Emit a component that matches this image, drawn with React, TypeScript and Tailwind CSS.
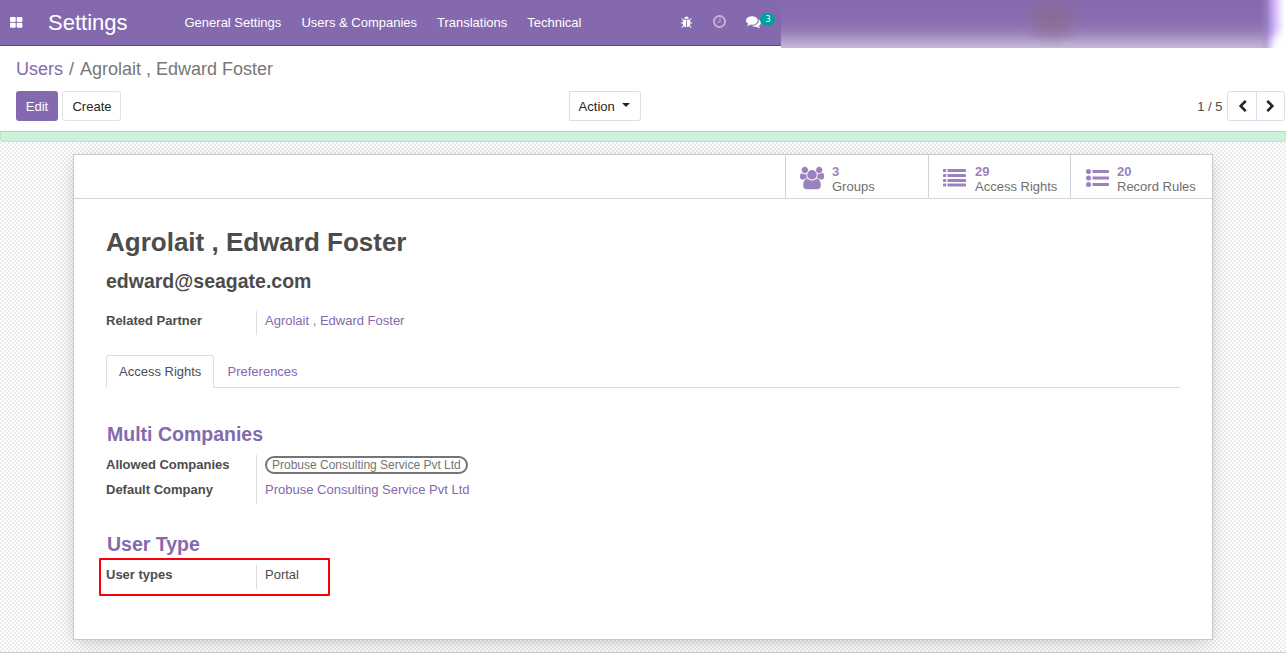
import React from "react";

const paths = {
  users:
    "M593 640q-162 5-265 128h-134q-82 0-138-40.5t-56-118.5q0-353 124-353 6 0 43.5 21t97.5 42.5 119 21.5q67 0 133-23-5 37-5 66 0 159 90 287zm1071 637q0 120-73 189.5t-194 69.5h-874q-121 0-194-69.5t-73-189.5q0-53 3.5-103.5t14-109 26.5-108.5 43-97.5 62-81 85.5-53.5 111.5-20q10 0 43 21.5t73 48 107 48 135 21.5 135-21.5 107-48 73-48 43-21.5q61 0 111.5 20t85.5 53.5 62 81 43 97.5 26.5 108.5 14 109 3.5 103.5zm-1024-1277q0 106-75 181t-181 75-181-75-75-181 75-181 181-75 181 75 75 181zm704 384q0 159-112.5 271.5t-271.5 112.5-271.5-112.5-112.5-271.5 112.5-271.5 271.5-112.5 271.5 112.5 112.5 271.5zm576 225q0 78-56 118.5t-138 40.5h-134q-103-123-265-128 90-128 90-287 0-29-5-66 66 23 133 23 59 0 119-21.5t97.5-42.5 43.5-21q124 0 124 353zm-128-609q0 106-75 181t-181 75-181-75-75-181 75-181 181-75 181 75 75 181z",
  bug: "M1696 960q0 26-19 45t-45 19h-224q0 171-67 290l208 209q19 19 19 45t-19 45q-18 19-45 19t-45-19l-198-197q-5 5-15 13t-42 28.5-65 36.5-82 29-97 13v-896h-128v896q-51 0-101.5-13.5t-87-33-66-39-43.5-32.5l-15-14-183 207q-20 21-48 21-24 0-43-16-19-18-20.5-44.5t15.5-46.5l202-227q-58-114-58-274h-224q-26 0-45-19t-19-45 19-45 45-19h224v-294l-173-173q-19-19-19-45t19-45 45-19 45 19l173 173h844l173-173q19-19 45-19t45 19 19 45-19 45l-173 173v294h224q26 0 45 19t19 45zm-480-576h-640q0-133 93.5-226.5t226.5-93.5 226.5 93.5 93.5 226.5z",
  clock:
    "M1024 544v448q0 14-9 23t-23 9h-320q-14 0-23-9t-9-23v-64q0-14 9-23t23-9h224v-352q0-14 9-23t23-9h64q14 0 23 9t9 23zm416 352q0-148-73-273t-198-198-273-73-273 73-198 198-73 273 73 273 198 198 273 73 273-73 198-198 73-273zm224 0q0 209-103 385.5t-279.5 279.5-385.5 103-385.5-103-279.5-279.5-103-385.5 103-385.5 279.5-279.5 385.5-103 385.5 103 279.5 279.5 103 385.5z",
  comments:
    "M1408 768q0 139-94 257t-256.5 186.5-353.5 68.5q-86 0-176-16-124 88-278 128-36 9-86 16h-3q-11 0-20.5-8t-11.5-21q-1-3-1-6.5t.5-6.5 2-6l2.5-5 3.5-5.5 4-5 4.5-5 4-4.5q5-6 23-25t26-29.5 22.5-29 25-38.5 20.5-44q-124-72-195-177t-71-224q0-139 94-257t256.5-186.5 353.5-68.5 353.5 68.5 256.5 186.5 94 257zm384 256q0 120-71 224.5t-195 176.5q10 24 20.5 44t25 38.5 22.5 29 26 29.5 23 25q1 1 4 4.5t4.5 5 4 5 3.5 5.5l2.5 5 2 6 .5 6.5-1 6.5q-3 14-13 22t-22 7q-50-7-86-16-154-40-278-128-90 16-176 16-271 0-472-132 58 4 88 4 161 0 309-45t264-129q125-92 192-212t67-254q0-77-23-152 129 71 204 178t75 230z",
  chevron:
    "M1427 301l-531 531 531 531q19 19 19 45t-19 45l-166 166q-19 19-45 19t-45-19l-742-742q-19-19-19-45t19-45l742-742q19-19 45-19t45 19l166 166q19 19 19 45t-19 45z",
};

function Glyph({ d, className, viewBox = "0 0 1792 1792" }: { d: string; className: string; viewBox?: string }) {
  return (
    <svg viewBox={viewBox} fill="currentColor" className={className} aria-hidden="true">
      <path d={d} />
    </svg>
  );
}

function AppsIcon() {
  return (
    <svg viewBox="0 0 13 11" fill="currentColor" className="-mt-px ml-[10px] h-[11px] w-[13px]" aria-hidden="true">
      <rect width="5.7" height="5" rx="1" />
      <rect x="6.7" width="5.7" height="5" rx="1" />
      <rect y="5.7" width="5.7" height="5" rx="1" />
      <rect x="6.7" y="5.7" width="5.7" height="5" rx="1" />
    </svg>
  );
}

function ListIcon() {
  return (
    <svg viewBox="0 0 23 18" fill="currentColor" className="mt-px mr-px h-[18px] w-[23px]" aria-hidden="true">
      {[0, 5, 10, 14.5].map((y) => (
        <g key={y}>
          <rect y={y} width="3.2" height="3" rx="0.4" />
          <rect x="4.5" y={y} width="18.5" height="3" rx="0.4" />
        </g>
      ))}
    </svg>
  );
}

function BulletsIcon() {
  return (
    <svg viewBox="0 0 23 18" fill="currentColor" className="mt-px h-[18px] w-[23px]" aria-hidden="true">
      {[2.5, 9, 15.5].map((y) => (
        <g key={y}>
          <circle cx="2.5" cy={y} r="2.5" />
          <rect x="6.5" y={y - 1.5} width="16.5" height="3" rx="0.4" />
        </g>
      ))}
    </svg>
  );
}

function Stat({ icon, value, label }: { icon: React.ReactNode; value: string; label: string }) {
  return (
    <div className="flex h-full items-center border-l border-[#ced4da]">
      <div className="flex w-[46px] shrink-0 justify-center pt-px pl-[6px] text-[#9b82bf]">{icon}</div>
      <div className="pt-[5px] leading-[15px] whitespace-nowrap">
        <div className="font-bold text-[#9b82bf]">{value}</div>
        <div className="text-[#6f6f6f]">{label}</div>
      </div>
    </div>
  );
}

function Field({ label, joined = false, children }: { label: string; joined?: boolean; children: React.ReactNode }) {
  return (
    <div className="flex h-[25px] items-start">
      <div className="w-[150px] shrink-0 font-bold leading-5">{label}</div>
      <div className={`${joined ? "h-[25px]" : "h-6"} border-l border-[#dddddd] pl-2 leading-5`}>{children}</div>
    </div>
  );
}

export default function App() {
  return (
    <div className="flex h-[653px] w-[1286px] flex-col overflow-hidden bg-white font-['Liberation_Sans',Arial,sans-serif] text-[13px] text-[#4c4c4c]">
      <header className="relative flex h-[46px] shrink-0 items-center border-b border-[#5f4594] bg-[#8569ae] text-white">
        <AppsIcon />
        <div className="ml-[25px] w-[136.5px] text-[22px] leading-none">Settings</div>
        <nav className="flex gap-5">
          <span>General Settings</span>
          <span className="pl-[0.15px]">Users &amp; Companies</span>
          <span className="-ml-[0.15px]">Translations</span>
          <span>Technical</span>
        </nav>
        <div className="ml-[99px] flex items-center">
          <Glyph d={paths.bug} className="h-[13px] w-[13px]" />
          <Glyph d={paths.clock} className="mt-[-2px] ml-[19px] h-[15px] w-[15px] opacity-50" />
          <Glyph d={paths.comments} className="mt-[-3px] ml-[19px] h-[15px] w-[15px]" />
          <span className="mt-[-6px] ml-[-1px] flex h-[13px] w-[15px] items-center justify-center rounded-[7px] bg-[#00a09d] font-['DejaVu_Sans'] text-[8px] leading-none">
            3
          </span>
        </div>
        <div className="absolute top-0 right-0 h-12 w-[505px] overflow-hidden bg-[linear-gradient(to_bottom,#866aae_0%,#886db0_40%,#9077b4_58%,#a18cc0_75%,#b9a9d0_90%,#c5b8da_100%)]">
          <div className="absolute top-0 left-[238px] h-12 w-[66px] bg-[radial-gradient(ellipse_at_50%_38%,#8b6d8cbb_0%,#8b6d8c88_25%,#8b6d8c33_50%,transparent_70%)]" />
          <div className="absolute top-0 right-0 h-12 w-[26px] bg-[linear-gradient(to_right,transparent,#a488cd88_25%,#c3a6f0_48%,#d9c1ff_62%,#f3e9ff_82%,#ffffff_96%)]" />
          <div className="absolute right-[-16px] bottom-[-16px] h-8 w-8 rounded-full bg-white blur-[4px]" />
        </div>
      </header>

      <section className="flex h-[85px] shrink-0 flex-col pt-[13px] pr-px pl-4">
        <div className="flex h-5 items-center gap-[6px] text-[18px] text-[#777777]">
          <span className="text-[#8569ae]">Users</span>
          <span>/</span>
          <span>Agrolait , Edward Foster</span>
        </div>
        <div className="mt-3 flex h-[30px]">
          <div className="flex w-[553px] gap-1">
            <button className="h-[30px] w-[42px] rounded-[3px] bg-[#8569ae] pt-[2px] text-white">Edit</button>
            <button className="h-[30px] w-[59px] rounded-[3px] border border-[#dee2e6] pt-[2px] pl-px text-[#212529]">Create</button>
          </div>
          <button className="flex h-[30px] w-[72px] items-center rounded-r-[3px] border border-[#dcdde9] pt-[2px] pl-[8.6px] text-[#212529]">
            Action
            <svg viewBox="0 0 8 4" fill="currentColor" className="mt-[-4px] ml-[7px] h-1 w-2" aria-hidden="true">
              <path d="M0 0h8L4 4z" />
            </svg>
          </button>
          <div className="ml-auto flex items-center">
            <span className="mr-[4.5px] pt-[2px]">1 / 5</span>
            <button className="flex h-[30px] w-[30px] items-center justify-center rounded-l-[3px] border border-[#dcdde9] text-[#212529]">
              <Glyph d={paths.chevron} className="mt-px h-[13px] w-[13px]" />
            </button>
            <button className="ml-[-1px] flex h-[30px] w-[29px] items-center justify-center rounded-r-[3px] border border-[#dcdde9] text-[#212529]">
              <Glyph d={paths.chevron} className="mt-px h-[13px] w-[13px] -scale-x-100" />
            </button>
          </div>
        </div>
      </section>

      <main className="flex min-h-0 flex-1 flex-col border-y border-t-[#c8cacc] border-b-[#cccccc] bg-white bg-[repeating-conic-gradient(#ebebeb_0_25%,#ffffff_0_50%)] bg-[size:4px_4px]">
        <div className="h-[10px] shrink-0 rounded-b-[3px] border border-t-0 border-[#b8e8c9] bg-[#cdf1da]" />
        <article className="mt-3 ml-[73px] h-[486px] w-[1140px] shrink-0 border border-[#c8c8d3] bg-white shadow-[0_4px_18px_-4px_rgba(0,0,0,0.25)]">
          <div className="grid h-[44px] grid-cols-[711px_143px_142px_142px] border-b border-[#ced4da]">
            <div />
            <Stat
              icon={<Glyph d={paths.users} viewBox="0 -256 1920 1792" className="mt-px mr-[-0.5px] h-6 w-6" />}
              value="3"
              label="Groups"
            />
            <Stat icon={<ListIcon />} value="29" label="Access Rights" />
            <Stat icon={<BulletsIcon />} value="20" label="Record Rules" />
          </div>
          <div className="pt-[28px] pr-8 pl-8">
            <h1 className="text-[26px] leading-[31px] font-bold">Agrolait , Edward Foster</h1>
            <h2 className="mt-[12px] text-[19.5px] leading-[23px] font-bold">edward@seagate.com</h2>
            <div className="mt-[18px]">
              <Field label="Related Partner">
                <span className="text-[#8569ae]">Agrolait , Edward Foster</span>
              </Field>
            </div>
            <div className="mt-[19px] flex h-[33px] border-b border-[#dcdde9]">
              <div className="h-[33px] w-[108px] rounded-t-[3px] border border-b-0 border-[#dcdde9] bg-white pl-3 leading-8 text-[#495057]">
                Access Rights
              </div>
              <div className="pt-px pl-[13.5px] leading-8 text-[#8569ae]">Preferences</div>
            </div>
            <h3 className="mt-[35px] pl-px text-[19.5px] leading-[23px] font-bold text-[#8569ae]">Multi Companies</h3>
            <div className="mt-[9px]">
              <Field label="Allowed Companies" joined>
                <span className="mt-px flex h-[18px] items-center rounded-full border-2 border-[#757575] px-[5px] text-[12px] text-[#757575]">
                  Probuse Consulting Service Pvt Ltd
                </span>
              </Field>
              <Field label="Default Company">
                <span className="text-[#8569ae]">Probuse Consulting Service Pvt Ltd</span>
              </Field>
            </div>
            <h3 className="mt-[28px] pl-px text-[19.5px] leading-[23px] font-bold text-[#8569ae]">User Type</h3>
            <div className="mt-[2px] ml-[-7px] h-[38px] w-[231px] rounded-[1px] border-2 border-[#fb0007] pt-[5px] pl-[5px]">
              <Field label="User types">Portal</Field>
            </div>
          </div>
        </article>
      </main>
    </div>
  );
}
